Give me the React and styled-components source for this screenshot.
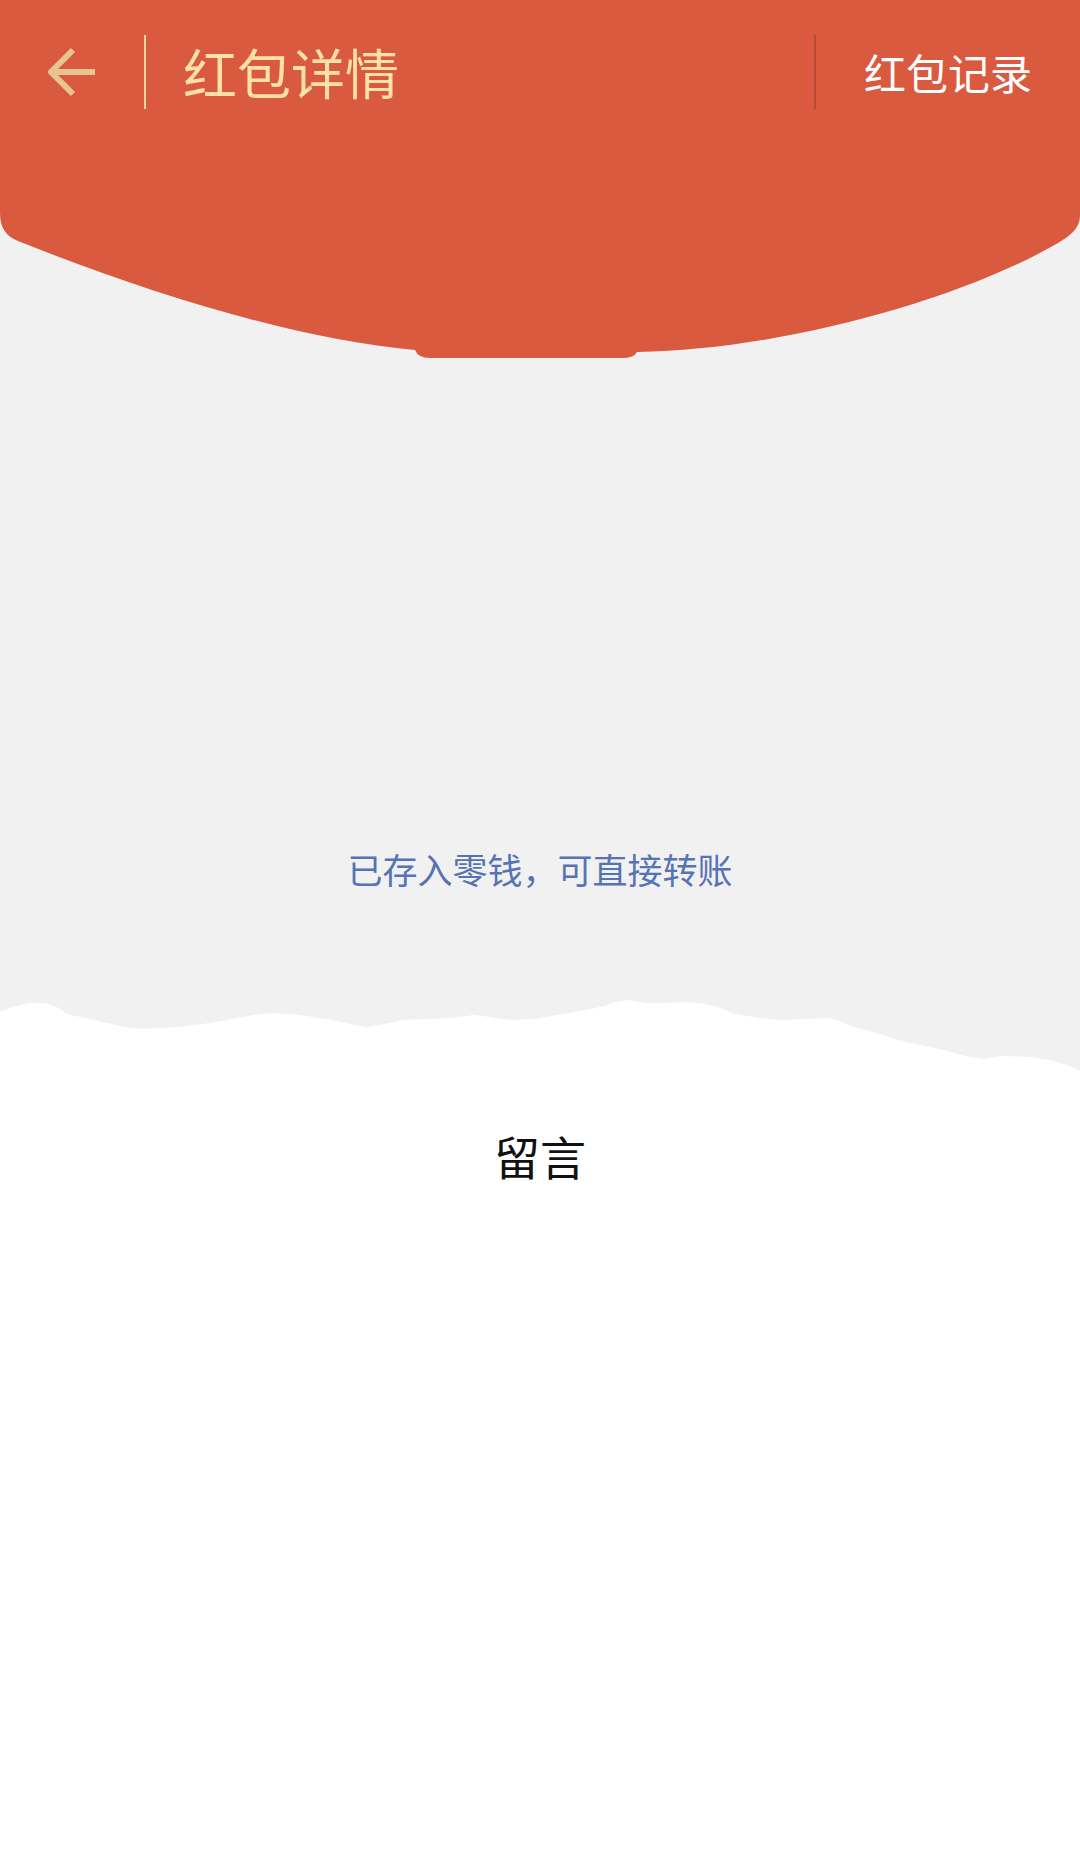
import styled, { createGlobalStyle } from "styled-components";

const GlobalStyle = createGlobalStyle`
  html, body {
    margin: 0;
    padding: 0;
    background: #ffffff;
  }
  body {
    font-family: "Noto Sans CJK SC", "Noto Sans", sans-serif;
  }
`;

const Page = styled.div`
  width: 1080px;
  min-height: 1858px;
  display: flex;
  flex-direction: column;
  background: #ffffff;
`;

const Top = styled.section`
  background: #f1f1f1;
  display: flex;
  flex-direction: column;
  align-items: stretch;
`;

// red cover with the rounded belly and the little tab in the middle
const Header = styled.header`
  height: 358px;
  background: #da5a40;
  clip-path: path("M0 0 H1080 V216 C1080 228 1070 236 1058 243 C960 300 780 350 637 352 Q634 358 622 358 H430 Q418 358 415 350 C300 340 150 294 18 241 C6 236 0 228 0 213 Z");
`;

const NavBar = styled.nav`
  height: 144px;
  display: flex;
  align-items: center;
`;

const BackButton = styled.button`
  width: 144px;
  height: 74px;
  padding: 0 0 0 48px;
  border: 0;
  background: none;
  display: flex;
  align-items: center;
  cursor: pointer;
`;

const Divider = styled.span`
  width: 2px;
  height: 74px;
  background: ${(p) => p.color};
`;

const Title = styled.h1`
  flex: 1;
  margin: 0 0 0 37px;
  font-size: 54px;
  font-weight: 400;
  line-height: 1;
  color: #fde1a9;
`;

const RecordLink = styled.a`
  margin: 0 48px 0 48px;
  font-size: 42px;
  line-height: 1;
  color: #ffffff;
  text-decoration: none;
`;

const Notice = styled.p`
  margin: 486px 0 0;
  text-align: center;
  font-size: 35px;
  line-height: 49px;
  color: #5673b3;
`;

const TornEdge = styled.svg`
  display: block;
  width: 1080px;
  height: 80px;
  margin-top: 100px;
`;

const Message = styled.section`
  flex: 1;
  background: #ffffff;
  padding-top: 50px;
  display: flex;
  justify-content: center;
`;

const MessageTitle = styled.h2`
  margin: 0;
  font-size: 46px;
  font-weight: 400;
  line-height: 64px;
  color: #111111;
`;

const edge = [
  [0, 19], [12, 14], [30, 10], [45, 10], [59, 15], [65, 20], [71, 22], [90, 26],
  [107, 30], [125, 34], [142, 36], [160, 35], [178, 34], [210, 30], [237, 25],
  [255, 22], [273, 20], [300, 22], [332, 27], [350, 31], [367, 34], [385, 31],
  [403, 27], [430, 26], [450, 25], [474, 22], [490, 24], [510, 27], [535, 26],
  [557, 22], [580, 18], [605, 13], [615, 9], [628, 7], [646, 10], [664, 10],
  [685, 9], [700, 10], [715, 13], [735, 21], [760, 25], [782, 27], [805, 26],
  [830, 25], [842, 29], [854, 34], [880, 41], [901, 48], [925, 53], [948, 58],
  [965, 63], [984, 66], [1000, 63], [1031, 64], [1050, 67], [1067, 72], [1080, 78],
];

const edgePath =
  "M0 80 L" + edge.map(([x, y]) => `${x} ${y}`).join(" L") + " L1080 80 Z";

const BackArrow = () => (
  <svg width="48" height="50" viewBox="0 0 48 50" fill="none">
    <path
      d="M47 25 H4 M25 3 L3 25 L25 47"
      stroke="#e8c590"
      strokeWidth="6"
      strokeLinejoin="miter"
    />
  </svg>
);

export default function App() {
  return (
    <Page>
      <GlobalStyle />
      <Top>
        <Header>
          <NavBar>
            <BackButton aria-label="返回">
              <BackArrow />
            </BackButton>
            <Divider color="#f6d7a0" />
            <Title>红包详情</Title>
            <Divider color="#b94a35" />
            <RecordLink href="#">红包记录</RecordLink>
          </NavBar>
        </Header>
        <Notice>已存入零钱，可直接转账</Notice>
        <TornEdge viewBox="0 0 1080 80" preserveAspectRatio="none">
          <path d={edgePath} fill="#ffffff" />
        </TornEdge>
      </Top>
      <Message>
        <MessageTitle>留言</MessageTitle>
      </Message>
    </Page>
  );
}
